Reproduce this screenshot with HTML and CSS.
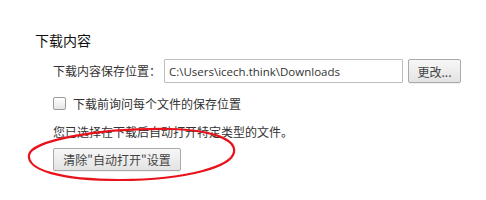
FILE: index.html
```html
<!DOCTYPE html>
<html lang="zh-CN">
<head>
<meta charset="utf-8">
<link rel="stylesheet" href="styles.css">
</head>
<body>
<div class="section">
  <div class="title">下载内容</div>
  <div class="content">
    <div class="row">
      <span class="label">下载内容保存位置：</span>
      <input class="path" type="text" value="C:\Users\icech.think\Downloads" readonly>
      <button class="btn change">更改...</button>
    </div>
    <label class="check-row">
      <span class="box"></span>
      <span class="check-text">下载前询问每个文件的保存位置</span>
    </label>
    <div class="note">您已选择在下载后自动打开特定类型的文件。</div>
    <button class="btn clear">清除"自动打开"设置</button>
  </div>
</div>
<svg class="mark" width="486" height="200" viewBox="0 0 486 200">
  <path d="M29,155 C31,141 95,128 170,129 C214,130 236,140 234,152 C232,166 188,180 120,180 C60,180 27,170 29,155 Z" fill="none" stroke="#e8121a" stroke-width="2.2"/>
</svg>
</body>
</html>
```
FILE: styles.css
```css
html, body {
  margin: 0;
  padding: 0;
  background: #ffffff;
}
body {
  width: 486px;
  height: 200px;
  position: relative;
  overflow: hidden;
  font-family: "Noto Sans CJK SC", "Open Sans", sans-serif;
  color: #333333;
}
.section {
  padding: 30px 0 0 35px;
}
.title {
  font-size: 14px;
  line-height: 20px;
  color: #111111;
}
.content {
  margin-left: 18px;
}
.row {
  display: flex;
  align-items: center;
  margin-top: 9px;
  height: 24px;
}
.label {
  font-size: 12px;
  line-height: 24px;
  width: 111px;
  white-space: nowrap;
}
.path {
  box-sizing: border-box;
  width: 239px;
  height: 24px;
  margin: 0;
  padding: 0 0 0 4px;
  border: 1px solid #bdbdbd;
  border-radius: 1px;
  font-family: "Open Sans", sans-serif;
  font-size: 11.5px;
  color: #333333;
  background: #ffffff;
  outline: none;
}
.btn {
  box-sizing: border-box;
  height: 24px;
  margin: 0;
  padding: 0 10px;
  border: 1px solid #a9a9a9;
  border-radius: 2px;
  background: linear-gradient(#f7f7f7, #e3e3e3);
  box-shadow: 0 1px 0 rgba(0,0,0,0.06);
  font-family: "Noto Sans CJK SC", "Open Sans", sans-serif;
  font-size: 12px;
  color: #444444;
}
.change {
  width: 53px;
  margin-left: 5px;
  padding: 0;
}
.check-row {
  display: flex;
  align-items: center;
  margin-top: 14px;
  height: 13px;
}
.box {
  box-sizing: border-box;
  width: 13px;
  height: 13px;
  border: 1px solid #9a9a9a;
  border-radius: 2px;
  background: linear-gradient(#ffffff, #e6e6e6);
}
.check-text {
  margin-left: 7px;
  font-size: 12px;
  line-height: 18px;
}
.note {
  margin-top: 13px;
  font-size: 12px;
  line-height: 18px;
}
.clear {
  display: block;
  margin-top: 7px;
  width: 128px;
  padding: 0;
  height: 23px;
}
.mark {
  position: absolute;
  left: 0;
  top: 0;
  pointer-events: none;
}
```
